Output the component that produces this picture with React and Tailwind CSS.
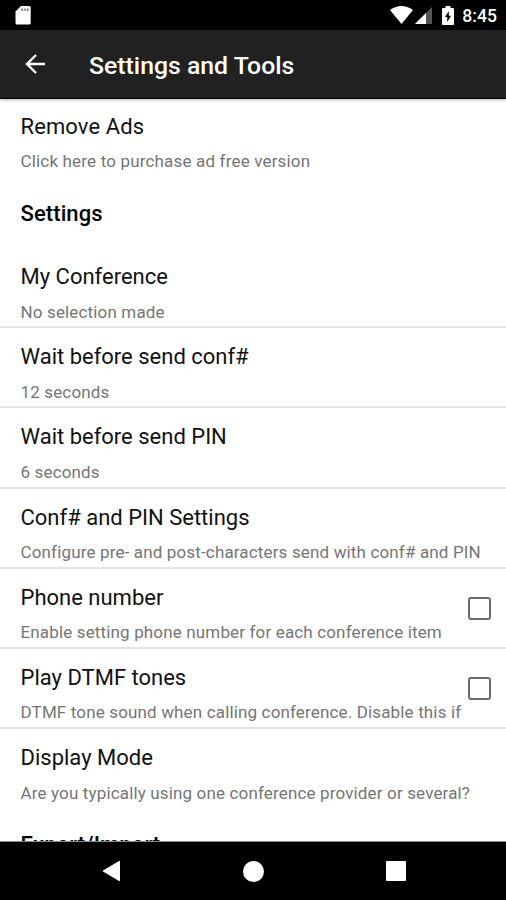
import React, { useState } from 'react';

const preferences = [
  { title: 'My Conference', summary: 'No selection made' },
  { title: 'Wait before send conf#', summary: '12 seconds' },
  { title: 'Wait before send PIN', summary: '6 seconds' },
  { title: 'Conf# and PIN Settings', summary: 'Configure pre- and post-characters send with conf# and PIN' },
  { title: 'Phone number', summary: 'Enable setting phone number for each conference item', checkable: true },
  { title: 'Play DTMF tones', summary: 'DTMF tone sound when calling conference. Disable this if', checkable: true },
  { title: 'Display Mode', summary: 'Are you typically using one conference provider or several?', last: true },
];

const StatusBar = () => (
  <div className="flex h-[30px] shrink-0 items-center justify-between bg-black pl-[15px] pr-[9px]">
    <svg className="h-5 w-4" viewBox="0 0 16 20">
      <path d="M6 1H14Q15.700 1 15.700 2.500V18Q15.700 19.500 14 19.500H2Q0.500 19.500 0.500 18V6.500Z" fill="#fff" />
      <path d="M6.500 3.500H8V6H6.500ZM9.300 3.500H10.800V6H9.300ZM12 3.500H13.500V6H12Z" fill="#777" />
    </svg>
    <div className="flex items-center">
      <svg className="h-[18px] w-[23px]" viewBox="0 0 23 18">
        <path d="M0 4Q11.500 -4 23 4L11.500 18Z" fill="#fff" />
      </svg>
      <svg className="ml-[2px] h-[18px] w-[17px]" viewBox="0 0 17 18">
        <path d="M0 18L17 1V18Z" fill="#555" />
        <path d="M0 18L11 7V18Z" fill="#fff" />
      </svg>
      <svg className="ml-[10px] h-[19px] w-[12px]" viewBox="0 0 12 19">
        <path d="M3.500 0H8.500V2H11Q12 2 12 3V18Q12 19 11 19H1Q0 19 0 18V3Q0 2 1 2H3.500Z" fill="#fff" />
        <path d="M6.800 5L3 11H5.200V16L9 9.700H6.800Z" fill="#000" />
      </svg>
      <span className="ml-[8px] pt-px text-[17.600px] leading-[30px] font-medium text-white">8:45</span>
    </div>
  </div>
);

const Toolbar = () => (
  <header className="relative z-10 flex h-[69px] shrink-0 items-center border-b border-black bg-[#212121] pl-[25px] shadow-[0_1px_3px_rgba(0,0,0,0.3)]">
    <svg className="h-[20px] w-[20px]" viewBox="0 0 20 20" fill="none" stroke="#fff" strokeWidth="2.400">
      <path d="M20 10H2M11 1L2 10L11 19" />
    </svg>
    <h1 className="ml-[44px] pt-1 text-[24.800px] leading-8 font-medium text-white">Settings and Tools</h1>
  </header>
);

const Preference = ({ item, checked, onToggle }) => (
  <div
    className={`flex h-[80.200px] shrink-0 items-start justify-between pt-[15px] pl-[20.500px] pr-[15px] ${
      item.last ? '' : 'border-b-2 border-[#e5e5e5]'
    }`}
  >
    <div className="whitespace-nowrap">
      <div className="text-[22px] leading-7 text-[#111]">{item.title}</div>
      <div className="mt-[10.500px] text-[17px] leading-5 tracking-[0.150px] text-[#757575]">{item.summary}</div>
    </div>
    {item.checkable && (
      <button
        type="button"
        role="checkbox"
        aria-checked={checked}
        aria-label={item.title}
        onClick={onToggle}
        className={`mt-[13px] h-[23px] w-[23px] shrink-0 rounded-[3px] border-2 border-[#6b6b6b] ${checked ? 'bg-[#6b6b6b]' : ''}`}
      />
    )}
  </div>
);

const NavigationBar = () => (
  <nav className="flex h-[58px] shrink-0 items-center bg-black pl-[101px]">
    <svg className="h-[22px] w-[20px]" viewBox="0 0 20 22">
      <path d="M18 1L2 10.500Q1 11 2 11.500L18 21Q19 21.300 19 20.500V1.500Q19 0.700 18 1Z" fill="#fff" />
    </svg>
    <div className="ml-[122px] h-[21px] w-[21px] rounded-full bg-white" />
    <div className="ml-[122px] h-[20px] w-[20px] rounded-[1px] bg-white" />
  </nav>
);

const App = () => {
  const [checked, setChecked] = useState({});

  const toggle = (title) => setChecked((prev) => ({ ...prev, [title]: !prev[title] }));

  return (
    <div className="flex h-[900px] w-[506px] flex-col overflow-hidden bg-white font-['Roboto',sans-serif]">
      <StatusBar />
      <Toolbar />
      <main className="flex min-h-0 flex-1 flex-col overflow-hidden border-b border-[#888]">
        <div className="h-[98px] shrink-0 pt-[13.500px] pl-[20.500px]">
          <div className="text-[22px] leading-7 tracking-[0.100px] text-[#111]">Remove Ads</div>
          <div className="mt-[10.500px] text-[17px] leading-5 tracking-[0.170px] text-[#757575]">Click here to purchase ad free version</div>
        </div>
        <h2 className="h-[51px] shrink-0 pl-[20.500px] pt-[2px] text-[22px] leading-[30px] font-medium tracking-[0.100px] text-black">Settings</h2>
        {preferences.map((item) => (
          <Preference
            key={item.title}
            item={item}
            checked={!!checked[item.title]}
            onToggle={() => toggle(item.title)}
          />
        ))}
        <h2 className="shrink-0 pl-[20.500px] pt-[21px] text-[22px] leading-[30px] font-medium tracking-[0.100px] text-black">Export/Import</h2>
      </main>
      <NavigationBar />
    </div>
  );
};

export default App;
